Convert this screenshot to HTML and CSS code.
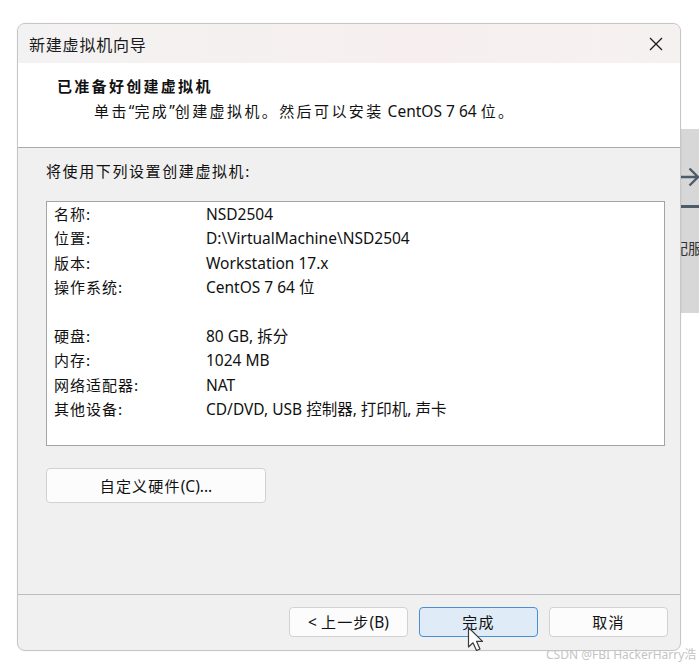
FILE: index.html
```html
<!DOCTYPE html>
<html lang="zh-CN">
<head>
<meta charset="utf-8">
<title>新建虚拟机向导</title>
<link rel="stylesheet" href="styles.css">
</head>
<body>
<div class="backwin">
  <svg class="backarrow" width="19" height="50" viewBox="0 0 19 50">
    <path d="M0 17 H17 M8.5 8.5 L17 17 L8.5 25.5" fill="none" stroke="#4d5c6a" stroke-width="2.4"/>
    <rect x="0" y="45" width="19" height="3" fill="#4d5c6a"/>
  </svg>
  <span class="backtext">配服</span>
</div>

<div class="dialog">
  <div class="titlebar">
    <span class="title">新建虚拟机向导</span>
    <svg class="close" width="14" height="14" viewBox="0 0 14 14">
      <path d="M1 1 L13 13 M13 1 L1 13" stroke="#1a1a1a" stroke-width="1.3" fill="none"/>
    </svg>
  </div>

  <div class="header">
    <div class="h-title">已准备好创建虚拟机</div>
    <div class="h-sub"><span class="cj wide">单击</span>“<span class="cj wide">完成</span>”<span class="cj wide">创建虚拟机。然后可以安装</span> CentOS 7 64 <span class="cj wide">位。</span></div>
  </div>

  <div class="body">
    <div class="intro">将使用下列设置创建虚拟机:</div>
    <div class="listbox">
      <div class="row"><span class="lab">名称:</span><span class="val">NSD2504</span></div>
      <div class="row"><span class="lab">位置:</span><span class="val">D:\VirtualMachine\NSD2504</span></div>
      <div class="row"><span class="lab">版本:</span><span class="val">Workstation 17.x</span></div>
      <div class="row"><span class="lab">操作系统:</span><span class="val">CentOS 7 64 位</span></div>
      <div class="row blank"></div>
      <div class="row"><span class="lab">硬盘:</span><span class="val">80 GB, 拆分</span></div>
      <div class="row"><span class="lab">内存:</span><span class="val">1024 MB</span></div>
      <div class="row"><span class="lab">网络适配器:</span><span class="val">NAT</span></div>
      <div class="row"><span class="lab">其他设备:</span><span class="val">CD/DVD, USB 控制器, 打印机, 声卡</span></div>
    </div>
    <button class="btn custom"><span class="blabel"><span class="cj">自定义硬件</span>(C)...</span></button>
  </div>

  <div class="footer">
    <button class="btn fbtn"><span class="blabel">&lt; <span class="cj">上一步</span>(B)</span></button>
    <button class="btn fbtn primary"><span class="blabel"><span class="cj">完成</span></span></button>
    <button class="btn fbtn"><span class="blabel"><span class="cj">取消</span></span></button>
  </div>
</div>

<svg class="cursor" width="20" height="28" viewBox="0 0 20 28">
  <path d="M1.5 1.5 L1.5 21 L6 16.8 L9.5 24.5 L13 23 L9.6 15.4 L15.5 15.4 Z" fill="#ffffff" stroke="#3a3a3a" stroke-width="1.2" stroke-linejoin="round"/>
</svg>

<div class="watermark">CSDN @FBI HackerHarry浩</div>
</body>
</html>
```

FILE: styles.css
```css
* {
  box-sizing: border-box;
}

html, body {
  margin: 0;
  padding: 0;
  background: #ffffff;
}

body {
  width: 699px;
  height: 669px;
  position: relative;
  overflow: hidden;
  padding: 23px 0 0 17px;
  font-family: "Noto Sans", "Noto Sans CJK SC", sans-serif;
  font-size: 15.5px;
  color: #111111;
}

.backwin {
  position: absolute;
  left: 650px;
  top: 129px;
  width: 49px;
  height: 184px;
  background: #d7d7d7;
  overflow: hidden;
}

.backarrow {
  position: absolute;
  left: 31px;
  top: 31px;
}

.backtext {
  position: absolute;
  left: 23px;
  top: 108px;
  font-family: "Noto Sans CJK SC", sans-serif;
  font-size: 15px;
  color: #333333;
  white-space: nowrap;
}

.dialog {
  position: relative;
  z-index: 1;
  width: 664px;
  height: 628px;
  border: 1px solid #c6c6c6;
  border-radius: 8px;
  background: #f0f0f0;
  overflow: hidden;
  display: flex;
  flex-direction: column;
  box-shadow: 0 0 2px rgba(0, 0, 0, 0.08);
}

.titlebar {
  height: 39px;
  flex: none;
  display: flex;
  align-items: center;
  justify-content: space-between;
  padding: 0 17px 0 11px;
  background: linear-gradient(to right, #f3f2f2, #f7efef 60%, #f6f1f1);
}

.title {
  font-family: "Noto Sans CJK SC", sans-serif;
  font-size: 16px;
  letter-spacing: 0.8px;
  color: #1a1a1a;
  margin-top: 1px;
}

.close {
  display: block;
}

.header {
  height: 85px;
  flex: none;
  background: #ffffff;
  border-bottom: 1px solid #a9a9a9;
  padding: 12px 0 0 39px;
}

.h-title {
  font-family: "Noto Sans CJK SC", sans-serif;
  font-weight: 700;
  font-size: 15px;
  letter-spacing: 2.3px;
  line-height: 22px;
  color: #111111;
}

.h-sub {
  margin: 3px 0 0 37px;
  line-height: 22px;
  white-space: nowrap;
}

.cj {
  font-family: "Noto Sans CJK SC", sans-serif;
  font-size: 15px;
  letter-spacing: 1.2px;
}

.cj.wide {
  letter-spacing: 2.4px;
}

.body {
  flex: 1;
  padding: 12px 15px 0 28px;
}

.intro {
  font-family: "Noto Sans CJK SC", sans-serif;
  font-size: 15px;
  letter-spacing: 1.6px;
  line-height: 22px;
}

.listbox {
  margin-top: 19px;
  height: 245px;
  background: #ffffff;
  border: 1px solid #a3a3a3;
  padding: 0 0 0 7px;
}

.row {
  display: grid;
  grid-template-columns: 152px 1fr;
  height: 24.4px;
  line-height: 24.4px;
  white-space: nowrap;
}

.lab {
  font-family: "Noto Sans CJK SC", sans-serif;
  font-size: 15px;
  letter-spacing: 1px;
}

.val {
  font-size: 15.5px;
}

.btn {
  font-family: "Noto Sans", "Noto Sans CJK SC", sans-serif;
  font-size: 15.5px;
  color: #111111;
  background: #fcfcfc;
  border: 1px solid #d2d2d2;
  border-radius: 4px;
  padding: 0;
  display: flex;
  align-items: center;
  justify-content: center;
}

.blabel {
  white-space: pre;
}

.custom {
  margin-top: 22px;
  width: 220px;
  height: 35px;
}

.footer {
  height: 56px;
  flex: none;
  border-top: 1px solid #bdbdbd;
  display: flex;
  justify-content: flex-end;
  gap: 11px;
  padding: 12px 12px 0 0;
}

.fbtn {
  width: 119px;
  height: 30px;
}

.primary {
  background: #dfebf7;
  border: 1px solid #4a8ed3;
}

.cursor {
  position: absolute;
  left: 467px;
  top: 626px;
  z-index: 3;
}

.watermark {
  position: absolute;
  z-index: 2;
  left: 546px;
  top: 646px;
  font-family: "Noto Sans", "Noto Sans CJK SC", sans-serif;
  font-size: 12px;
  line-height: 18px;
  color: #c4c4c4;
  white-space: nowrap;
}
```
